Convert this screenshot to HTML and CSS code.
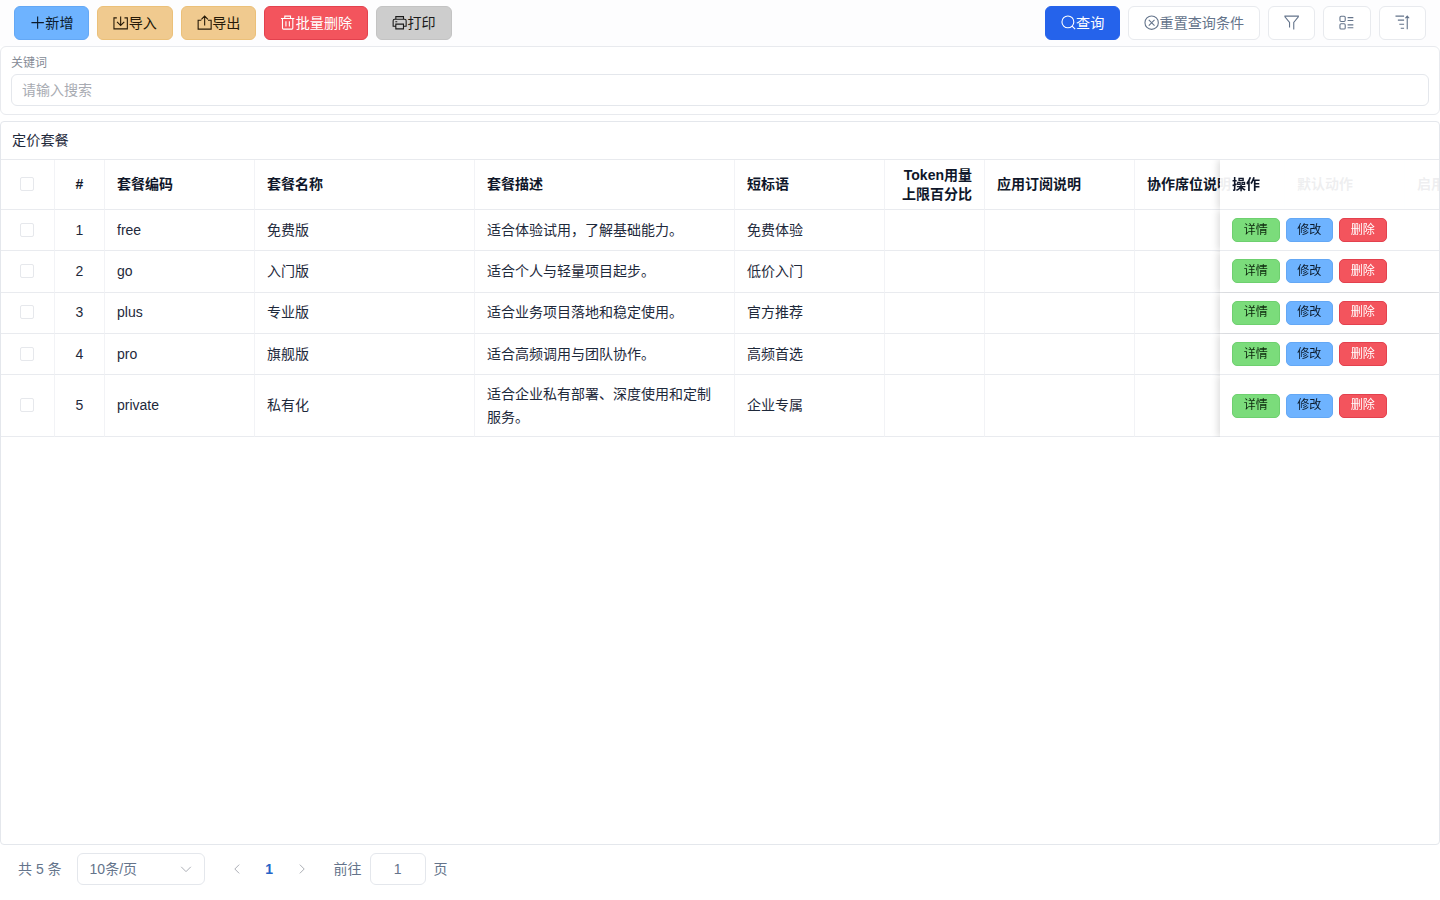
FILE: index.html
```html
<!DOCTYPE html>
<html lang="zh-CN">
<head>
  <meta charset="UTF-8" />
  <meta name="viewport" content="width=device-width, initial-scale=1.0" />
  <title>定价套餐</title>
  <link rel="stylesheet" href="styles.css">
</head>
<body>
  <div class="page">
    <div class="toolbar">
      <div class="btn-group">
        <button class="btn btn-add"><svg class="icon" viewBox="0 0 16 16"><path d="M8 1.5v13M1.5 8h13"/></svg><span>新增</span></button>
        <button class="btn btn-file"><svg class="icon" viewBox="0 0 16 16"><path d="M4 3H1v11.5h14V3h-3M8 1.5v9.5M4.2 7.3L8 11l3.8-3.7"/></svg><span>导入</span></button>
        <button class="btn btn-file"><svg class="icon" viewBox="0 0 16 16"><path d="M4.5 5.5H1.2v9.3h13.6V5.5h-3.3M8 11V1.3M4.6 4.5L8 1.1l3.4 3.4"/></svg><span>导出</span></button>
        <button class="btn btn-danger"><svg class="icon" viewBox="0 0 16 16"><path d="M1 3.6h14M5 3.4V1.2h6v2.2M2.6 3.8v9.9q0 1.1 1.1 1.1h8.6q1.1 0 1.1-1.1V3.8M6.2 6.5v5.5M9.8 6.5v5.5"/></svg><span>批量删除</span></button>
        <button class="btn btn-print"><svg class="icon" viewBox="0 0 16 16"><path d="M4 11.7H1.2V6q0-1.5 1.5-1.5h10.6q1.5 0 1.5 1.5v5.7H12M4 4.5V1.7h8v2.8M4 9.5h8v5H4zM3.5 7h2"/></svg><span>打印</span></button>
      </div>
      <div class="btn-group">
        <button class="btn btn-primary"><svg class="icon" viewBox="0 0 16 16"><circle cx="7.2" cy="7.2" r="6.2"/><path d="M11.6 11.6l3.2 3.2"/></svg><span>查询</span></button>
        <button class="btn"><svg class="icon" viewBox="0 0 16 16"><circle cx="8" cy="8" r="7"/><path d="M5 5l6 6M11 5l-6 6"/></svg><span>重置查询条件</span></button>
        <button class="btn"><svg class="icon" viewBox="0 0 16 16"><path d="M5.8 13V7.8L1 2V1.2h14V2l-4.8 5.8v7.4"/></svg></button>
        <button class="btn"><svg class="icon" viewBox="0 0 16 16"><rect x="1" y="1.3" width="5.5" height="5.5" rx="1.2"/><rect x="1" y="9.2" width="5.5" height="5.5" rx="1.2"/><path d="M9 2.7h6M9 5.7h6M9 10.3h6M9 13.3h6"/></svg></button>
        <button class="btn"><svg class="icon" viewBox="0 0 16 16"><path d="M.5 1.2h9M3 5.4h6.5M4.5 9.6h5M6 13.8h3.5M12.8 15V1.2M10.8 3.4l2-2.2 2 2.2"/></svg></button>
      </div>
    </div>

    <div class="search-panel">
      <label for="keyword">关键词</label>
      <input id="keyword" type="text" placeholder="请输入搜索">
    </div>

    <div class="table-panel">
      <div class="table-title">定价套餐</div>
      <div class="table-wrap">
        <table>
          <colgroup>
            <col class="w54"><col class="w50"><col class="w150"><col class="w220"><col class="w260"><col class="w150">
            <col class="w100"><col class="w150"><col class="w150"><col class="w120"><col class="w120"><col class="w220">
          </colgroup>
          <thead>
            <tr>
              <th class="center"><span class="checkbox"></span></th>
              <th class="center">#</th>
              <th>套餐编码</th>
              <th>套餐名称</th>
              <th>套餐描述</th>
              <th>短标语</th>
              <th class="right">Token用量上限百分比</th>
              <th>应用订阅说明</th>
              <th>协作席位说明</th>
              <th>默认动作</th>
              <th>启用</th>
              <th class="fixed">操作</th>
            </tr>
          </thead>
          <tbody id="rows"></tbody>
        </table>
      </div>
    </div>

    <div class="pagination">
      <span class="total">共 5 条</span>
      <div class="page-size">10条/页<svg class="arrow" viewBox="0 0 16 16"><path d="M2.5 5.5L8 11l5.5-5.5"/></svg></div>
      <svg class="arrow prev" viewBox="0 0 16 16"><path d="M10.5 3L5.5 8l5 5"/></svg>
      <span class="current">1</span>
      <svg class="arrow next" viewBox="0 0 16 16"><path d="M5.5 3l5 5-5 5"/></svg>
      <span>前往</span>
      <input class="jump" type="text" value="1">
      <span>页</span>
    </div>
  </div>

  <script>
    const plans = [
      ['free', '免费版', '适合体验试用，了解基础能力。', '免费体验'],
      ['go', '入门版', '适合个人与轻量项目起步。', '低价入门'],
      ['plus', '专业版', '适合业务项目落地和稳定使用。', '官方推荐'],
      ['pro', '旗舰版', '适合高频调用与团队协作。', '高频首选'],
      ['private', '私有化', '适合企业私有部署、深度使用和定制服务。', '企业专属']
    ];

    document.getElementById('rows').innerHTML = plans.map((plan, i) => `
      <tr>
        <td class="center"><span class="checkbox"></span></td>
        <td class="center">${i + 1}</td>
        ${plan.map(text => `<td>${text}</td>`).join('')}
        <td></td><td></td><td></td><td></td><td></td>
        <td class="fixed">
          <div class="row-actions">
            <button class="btn-small btn-detail">详情</button>
            <button class="btn-small btn-add">修改</button>
            <button class="btn-small btn-danger">删除</button>
          </div>
        </td>
      </tr>`).join('');
  </script>
</body>
</html>
```
FILE: styles.css
```css
* {
  box-sizing: border-box;
}

body {
  margin: 0;
  font-family: "Liberation Sans", "Noto Sans CJK SC", sans-serif;
  font-size: 14px;
  color: #1e293b;
  background: #fff;
}

button,
input {
  font-family: inherit;
}

.page {
  height: 100vh;
  display: flex;
  flex-direction: column;
  overflow: hidden;
}

.toolbar {
  height: 46px;
  flex-shrink: 0;
  padding: 6px 14px;
  display: flex;
  justify-content: space-between;
  background: #fdfdfe;
}

.btn-group {
  display: flex;
  gap: 8px;
}

.btn {
  height: 34px;
  padding: 0 15px;
  display: flex;
  align-items: center;
  border: 1px solid #e8eaee;
  border-radius: 6px;
  background: #fff;
  color: #64748b;
  font-size: 14.1px;
  white-space: nowrap;
  cursor: pointer;
}

.btn span {
  padding-bottom: 2px;
}

.icon {
  width: 15.3px;
  height: 15.3px;
  flex-shrink: 0;
  fill: none;
  stroke: currentColor;
  stroke-width: 1.15;
}

.btn-add {
  background: #6eb3ff;
  border: 1px solid #64a8f5;
  color: #0b1a2b;
}

.btn-file {
  background: #f0ca8f;
  border-color: #ebc079;
  color: #261a08;
}

.btn-danger {
  background: #f3545d;
  border: 1px solid #e3414e;
  color: #fff;
}

.btn-print {
  background: #cdcdcd;
  border-color: #c3c3c3;
  color: #1a1a1a;
}

.btn-primary {
  background: #2563eb;
  border-color: #2563eb;
  color: #fff;
}

.search-panel {
  height: 69px;
  flex-shrink: 0;
  padding: 6px 10px;
  border: 1px solid #e8eaee;
  border-radius: 6px;
}

.search-panel label {
  display: block;
  height: 21px;
  font-size: 12px;
  line-height: 20px;
  color: #858b96;
}

.search-panel input {
  display: block;
  width: 100%;
  height: 32px;
  padding: 0 10px;
  border: 1px solid #e4e7ec;
  border-radius: 6px;
  font-size: 14px;
  outline: none;
}

.search-panel input::placeholder {
  color: #a8abb2;
}

.table-panel {
  height: 724px;
  flex-shrink: 0;
  margin-top: 6px;
  border: 1px solid #e4e7ec;
  border-radius: 4px;
  overflow: hidden;
}

.table-title {
  height: 38px;
  padding-left: 11px;
  font-size: 14.2px;
  line-height: 36px;
  border-bottom: 1px solid #e8eaee;
}

.table-wrap {
  overflow: hidden;
}

table {
  width: 1744px;
  table-layout: fixed;
  border-collapse: separate;
  border-spacing: 0;
}

.w50 { width: 50px; }
.w54 { width: 54px; }
.w100 { width: 100px; }
.w120 { width: 120px; }
.w150 { width: 150px; }
.w220 { width: 220px; }
.w260 { width: 260px; }

th,
td {
  padding: 0 12px;
  border-right: 1px solid #f2f3f6;
  border-bottom: 1px solid #e9ebef;
  text-align: left;
  line-height: 23px;
}

th {
  height: 50px;
  color: #0f172a;
  line-height: 19px;
}

td {
  height: 41.3px;
}

tbody tr:last-child td {
  height: 62.2px;
}

.center {
  padding: 0;
  text-align: center;
}

.right {
  text-align: right;
}

.checkbox {
  display: block;
  width: 14px;
  height: 14px;
  margin: 0 0 1px 19px;
  border: 1px solid #e6e8ec;
  border-radius: 2px;
}

.fixed {
  position: sticky;
  right: -1px;
  border-right: 0;
  background: rgba(255, 255, 255, 0.93);
  box-shadow: -2px 0 7px rgba(0, 0, 0, 0.14);
  clip-path: inset(0 0 0 -10px);
}

td.fixed {
  background: #fff;
}

.row-actions {
  display: flex;
  gap: 6px;
}

.btn-small {
  width: 47.5px;
  height: 24px;
  padding: 0;
  border-radius: 5px;
  font-size: 12px;
  line-height: 21px;
  cursor: pointer;
}

.btn-detail {
  background: #7bdc7b;
  border: 1px solid #6ed06f;
  color: #0c250c;
}

.pagination {
  flex: 1;
  padding: 8px 18px;
  display: flex;
  align-items: flex-start;
  line-height: 32px;
  color: #64748b;
}

.page-size {
  width: 128px;
  height: 32px;
  margin: 0 25px 0 15px;
  padding: 0 11px 0 12px;
  display: flex;
  align-items: center;
  justify-content: space-between;
  border: 1px solid #e4e7ec;
  border-radius: 6px;
}

.arrow {
  width: 14px;
  height: 14px;
  fill: none;
  stroke: #a8abb2;
  stroke-width: 1.1;
}

.prev,
.next {
  margin-top: 9px;
}

.current {
  width: 51px;
  text-align: center;
  font-weight: bold;
  color: #2563c7;
}

.next {
  margin-right: 25px;
}

.jump {
  width: 56px;
  height: 32px;
  margin: 0 8px;
  border: 1px solid #e4e7ec;
  border-radius: 6px;
  text-align: center;
  font-size: 14px;
  color: #64748b;
}
```
